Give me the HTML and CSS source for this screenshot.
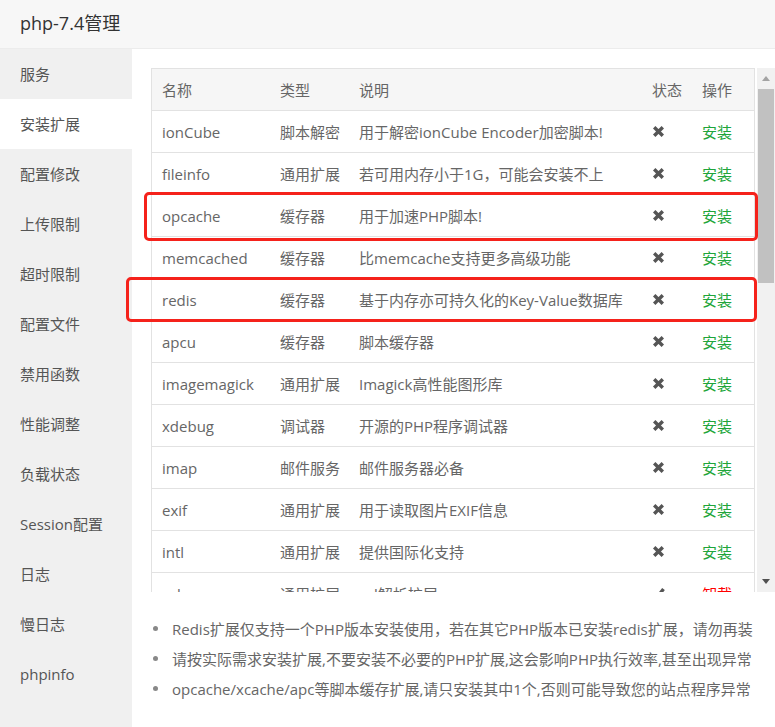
FILE: index.html
```html
<!DOCTYPE html>
<html lang="zh-CN">
<head>
<meta charset="utf-8">
<title>php-7.4管理</title>
<link rel="stylesheet" href="styles.css">
</head>
<body>
<div class="app">
  <header class="title">php-7.4管理</header>
  <div class="body">
    <nav class="side">
      <p class="item">服务</p>
      <p class="item active">安装扩展</p>
      <p class="item">配置修改</p>
      <p class="item">上传限制</p>
      <p class="item">超时限制</p>
      <p class="item">配置文件</p>
      <p class="item">禁用函数</p>
      <p class="item">性能调整</p>
      <p class="item">负载状态</p>
      <p class="item">Session配置</p>
      <p class="item">日志</p>
      <p class="item">慢日志</p>
      <p class="item">phpinfo</p>
    </nav>
    <main class="main">
      <div class="scrollbox">
        <div class="viewport">
          <div class="grid">
            <div class="row head"><span>名称</span><span>类型</span><span>说明</span><span>状态</span><span>操作</span></div>
            <div class="row"><span>ionCube</span><span>脚本解密</span><span>用于解密ionCube Encoder加密脚本!</span><span><svg class="ico" viewBox="0 0 13 13"><path d="M2.2 2.2L10.8 10.8M10.8 2.2L2.2 10.8"/></svg></span><span class="ins">安装</span></div>
            <div class="row"><span>fileinfo</span><span>通用扩展</span><span>若可用内存小于1G，可能会安装不上</span><span><svg class="ico" viewBox="0 0 13 13"><path d="M2.2 2.2L10.8 10.8M10.8 2.2L2.2 10.8"/></svg></span><span class="ins">安装</span></div>
            <div class="row"><span>opcache</span><span>缓存器</span><span>用于加速PHP脚本!</span><span><svg class="ico" viewBox="0 0 13 13"><path d="M2.2 2.2L10.8 10.8M10.8 2.2L2.2 10.8"/></svg></span><span class="ins">安装</span></div>
            <div class="row"><span>memcached</span><span>缓存器</span><span>比memcache支持更多高级功能</span><span><svg class="ico" viewBox="0 0 13 13"><path d="M2.2 2.2L10.8 10.8M10.8 2.2L2.2 10.8"/></svg></span><span class="ins">安装</span></div>
            <div class="row"><span>redis</span><span>缓存器</span><span>基于内存亦可持久化的Key-Value数据库</span><span><svg class="ico" viewBox="0 0 13 13"><path d="M2.2 2.2L10.8 10.8M10.8 2.2L2.2 10.8"/></svg></span><span class="ins">安装</span></div>
            <div class="row"><span>apcu</span><span>缓存器</span><span>脚本缓存器</span><span><svg class="ico" viewBox="0 0 13 13"><path d="M2.2 2.2L10.8 10.8M10.8 2.2L2.2 10.8"/></svg></span><span class="ins">安装</span></div>
            <div class="row"><span>imagemagick</span><span>通用扩展</span><span>Imagick高性能图形库</span><span><svg class="ico" viewBox="0 0 13 13"><path d="M2.2 2.2L10.8 10.8M10.8 2.2L2.2 10.8"/></svg></span><span class="ins">安装</span></div>
            <div class="row"><span>xdebug</span><span>调试器</span><span>开源的PHP程序调试器</span><span><svg class="ico" viewBox="0 0 13 13"><path d="M2.2 2.2L10.8 10.8M10.8 2.2L2.2 10.8"/></svg></span><span class="ins">安装</span></div>
            <div class="row"><span>imap</span><span>邮件服务</span><span>邮件服务器必备</span><span><svg class="ico" viewBox="0 0 13 13"><path d="M2.2 2.2L10.8 10.8M10.8 2.2L2.2 10.8"/></svg></span><span class="ins">安装</span></div>
            <div class="row"><span>exif</span><span>通用扩展</span><span>用于读取图片EXIF信息</span><span><svg class="ico" viewBox="0 0 13 13"><path d="M2.2 2.2L10.8 10.8M10.8 2.2L2.2 10.8"/></svg></span><span class="ins">安装</span></div>
            <div class="row"><span>intl</span><span>通用扩展</span><span>提供国际化支持</span><span><svg class="ico" viewBox="0 0 13 13"><path d="M2.2 2.2L10.8 10.8M10.8 2.2L2.2 10.8"/></svg></span><span class="ins">安装</span></div>
            <div class="row"><span>xsl</span><span>通用扩展</span><span>xsl解析扩展</span><span><svg class="ico" viewBox="0 0 13 13"><path d="M1.5 7L5 10.5L11.5 2"/></svg></span><span class="del">卸载</span></div>
          </div>
        </div>
        <div class="sbar">
          <span class="btn"><i class="arr up"></i></span>
          <span class="track"><span class="thumb"></span></span>
          <span class="btn"><i class="arr down"></i></span>
        </div>
      </div>
      <ul class="notes">
        <li>Redis扩展仅支持一个PHP版本安装使用，若在其它PHP版本已安装redis扩展，请勿再装</li>
        <li>请按实际需求安装扩展,不要安装不必要的PHP扩展,这会影响PHP执行效率,甚至出现异常</li>
        <li>opcache/xcache/apc等脚本缓存扩展,请只安装其中1个,否则可能导致您的站点程序异常</li>
      </ul>
    </main>
  </div>
  <div class="mark mark1"></div>
  <div class="mark mark2"></div>
</div>
</body>
</html>
```

FILE: styles.css
```css
* { box-sizing: border-box; }
html, body { margin: 0; padding: 0; }
body {
  font-family: "Open Sans", "Noto Sans CJK SC", sans-serif;
  font-size: 15px;
  color: #666;
  background: #fff;
}
.app {
  position: relative;
  width: 775px;
  height: 727px;
  overflow: hidden;
}
.title {
  height: 49px;
  line-height: 47px;
  padding-left: 20px;
  font-size: 18px;
  color: #333;
  background: #f7f7f7;
  border-bottom: 1px solid #ececec;
}
.body {
  display: flex;
  height: 678px;
}
.side {
  width: 132px;
  flex: none;
  background: #f0f0f0;
}
.item {
  margin: 0;
  height: 50px;
  line-height: 50px;
  padding-left: 20px;
  color: #555;
  white-space: nowrap;
}
.item.active { background: #fff; }
.main {
  flex: 1;
  padding: 19px 0 0 19px;
}
.scrollbox {
  display: flex;
  height: 524px;
}
.viewport {
  width: 604px;
  height: 524px;
  overflow: hidden;
  flex: none;
}
.grid {
  border: 1px solid #e2e2e2;
  border-bottom: none;
}
.row {
  display: grid;
  grid-template-columns: 118px 79px 293px 50px 62px;
  height: 42px;
  border-bottom: 1px solid #e2e2e2;
  align-items: center;
}
.row span {
  padding-left: 10px;
  white-space: nowrap;
  height: 20px;
  line-height: 18px;
  display: flex;
  align-items: center;
}
.row.head { background: #f6f6f6; }
.ico {
  width: 13px;
  height: 13px;
  fill: none;
  stroke: #555;
  stroke-width: 3.4;
}
.ins { color: #20a53a; }
.del { color: #ff0000; }
.sbar {
  margin-left: 2px;
  width: 18px;
  height: 524px;
  background: #f1f1f1;
  display: flex;
  flex-direction: column;
}
.btn {
  height: 21px;
  flex: none;
  display: flex;
  align-items: center;
  justify-content: center;
}
.arr {
  width: 0;
  height: 0;
  border-left: 4.5px solid transparent;
  border-right: 4.5px solid transparent;
}
.arr.up { border-bottom: 5px solid #a3a3a3; }
.arr.down { border-top: 5px solid #505050; }
.track {
  flex: 1;
  padding: 0 1px;
}
.thumb {
  display: block;
  height: 194px;
  background: #c1c1c1;
}
.notes {
  list-style: none;
  margin: 21px 0 0 0;
  padding: 0;
}
.notes li {
  display: flex;
  align-items: center;
  height: 30px;
  white-space: nowrap;
  color: #666;
}
.notes li::before {
  content: "";
  width: 5px;
  height: 5px;
  border-radius: 50%;
  background: #888;
  margin: 0 14px 0 2px;
  flex: none;
}
.mark {
  position: absolute;
  border: 3px solid #f5221b;
  border-radius: 5px;
}
.mark1 { left: 144px; top: 192px; width: 614px; height: 49px; }
.mark2 { left: 126px; top: 277px; width: 631px; height: 45px; }
```
